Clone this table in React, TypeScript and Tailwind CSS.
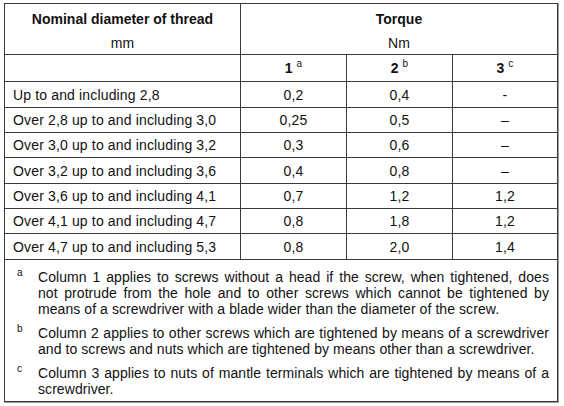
import React from "react";

const rows: { d: string; c1: string; c2: string; c3: string; h: string }[] = [
  { d: "Up to and including 2,8", c1: "0,2", c2: "0,4", c3: "-", h: "h-[25px]" },
  { d: "Over 2,8 up to and including 3,0", c1: "0,25", c2: "0,5", c3: "–", h: "h-[24px]" },
  { d: "Over 3,0 up to and including 3,2", c1: "0,3", c2: "0,6", c3: "–", h: "h-[24px]" },
  { d: "Over 3,2 up to and including 3,6", c1: "0,4", c2: "0,8", c3: "–", h: "h-[25px]" },
  { d: "Over 3,6 up to and including 4,1", c1: "0,7", c2: "1,2", c3: "1,2", h: "h-[24px]" },
  { d: "Over 4,1 up to and including 4,7", c1: "0,8", c2: "1,8", c3: "1,2", h: "h-[24px]" },
  { d: "Over 4,7 up to and including 5,3", c1: "0,8", c2: "2,0", c3: "1,4", h: "h-[25px]" },
];

const notes: { k: string; lines: string[] }[] = [
  {
    k: "a",
    lines: [
      "Column 1 applies to screws without a head if the screw, when tightened, does",
      "not protrude from the hole and to other screws which cannot be tightened by",
      "means of a screwdriver with a blade wider than the diameter of the screw.",
    ],
  },
  {
    k: "b",
    lines: [
      "Column 2 applies to other screws which are tightened by means of a screwdriver",
      "and to screws and nuts which are tightened by means other than a screwdriver.",
    ],
  },
  {
    k: "c",
    lines: [
      "Column 3 applies to nuts of mantle terminals which are tightened by means of a",
      "screwdriver.",
    ],
  },
];

function Head({ n, s }: { n: string; s: string }) {
  return (
    <div className="bg-white flex items-center justify-center">
      <span className="font-bold tracking-normal">{n}</span>
      <span className="ml-[4px] text-[10px] relative -top-[4px]">{s}</span>
    </div>
  );
}

export default function App() {
  return (
    <div
      className="w-[564px] h-[406px] bg-white pl-[4px] pt-[3px] text-[14px] leading-[16px] tracking-[0.15px] text-[#111]"
      style={{ fontFamily: '"Liberation Sans", Arial, sans-serif' }}
    >
      <div className="w-[555px] border-r border-b border-[#9a9a9a]">
        <div className="w-[554px] grid grid-cols-[235px_105px_105px_104px] gap-px p-px bg-[#3a3a3a]">
          <div className="bg-white h-[50px] flex flex-col items-center pt-[7px]">
            <span className="font-bold tracking-normal">Nominal diameter of thread</span>
            <span className="mt-[8px]">mm</span>
          </div>
          <div className="col-span-3 bg-white h-[50px] flex flex-col items-center pt-[7px]">
            <span className="font-bold tracking-normal">Torque</span>
            <span className="mt-[8px]">Nm</span>
          </div>

          <div className="bg-white h-[26px]" />
          <Head n="1" s="a" />
          <Head n="2" s="b" />
          <Head n="3" s="c" />

          {rows.map((r) => (
            <React.Fragment key={r.d}>
              <div className={`bg-white ${r.h} flex items-center pl-[8px]`}>{r.d}</div>
              <div className={`bg-white ${r.h} flex items-center justify-center`}>{r.c1}</div>
              <div className={`bg-white ${r.h} flex items-center justify-center`}>{r.c2}</div>
              <div className={`bg-white ${r.h} flex items-center justify-center`}>{r.c3}</div>
            </React.Fragment>
          ))}

          <div className="col-span-4 bg-white h-[141px] pt-[9px] pr-[8px] flex flex-col gap-[8px] tracking-[0.07px]">
            {notes.map((n) => (
              <div key={n.k} className="flex">
                <span className="w-[33px] shrink-0 pl-[12px] text-[10px] leading-[10px] -mt-[1px]">{n.k}</span>
                <div className="flex-1 min-w-0">
                  {n.lines.map((l, i) => (
                    <p
                      key={i}
                      className={
                        i < n.lines.length - 1
                          ? "whitespace-nowrap [text-align-last:justify]"
                          : "whitespace-nowrap"
                      }
                    >
                      {l}
                    </p>
                  ))}
                </div>
              </div>
            ))}
          </div>
        </div>
      </div>
    </div>
  );
}
